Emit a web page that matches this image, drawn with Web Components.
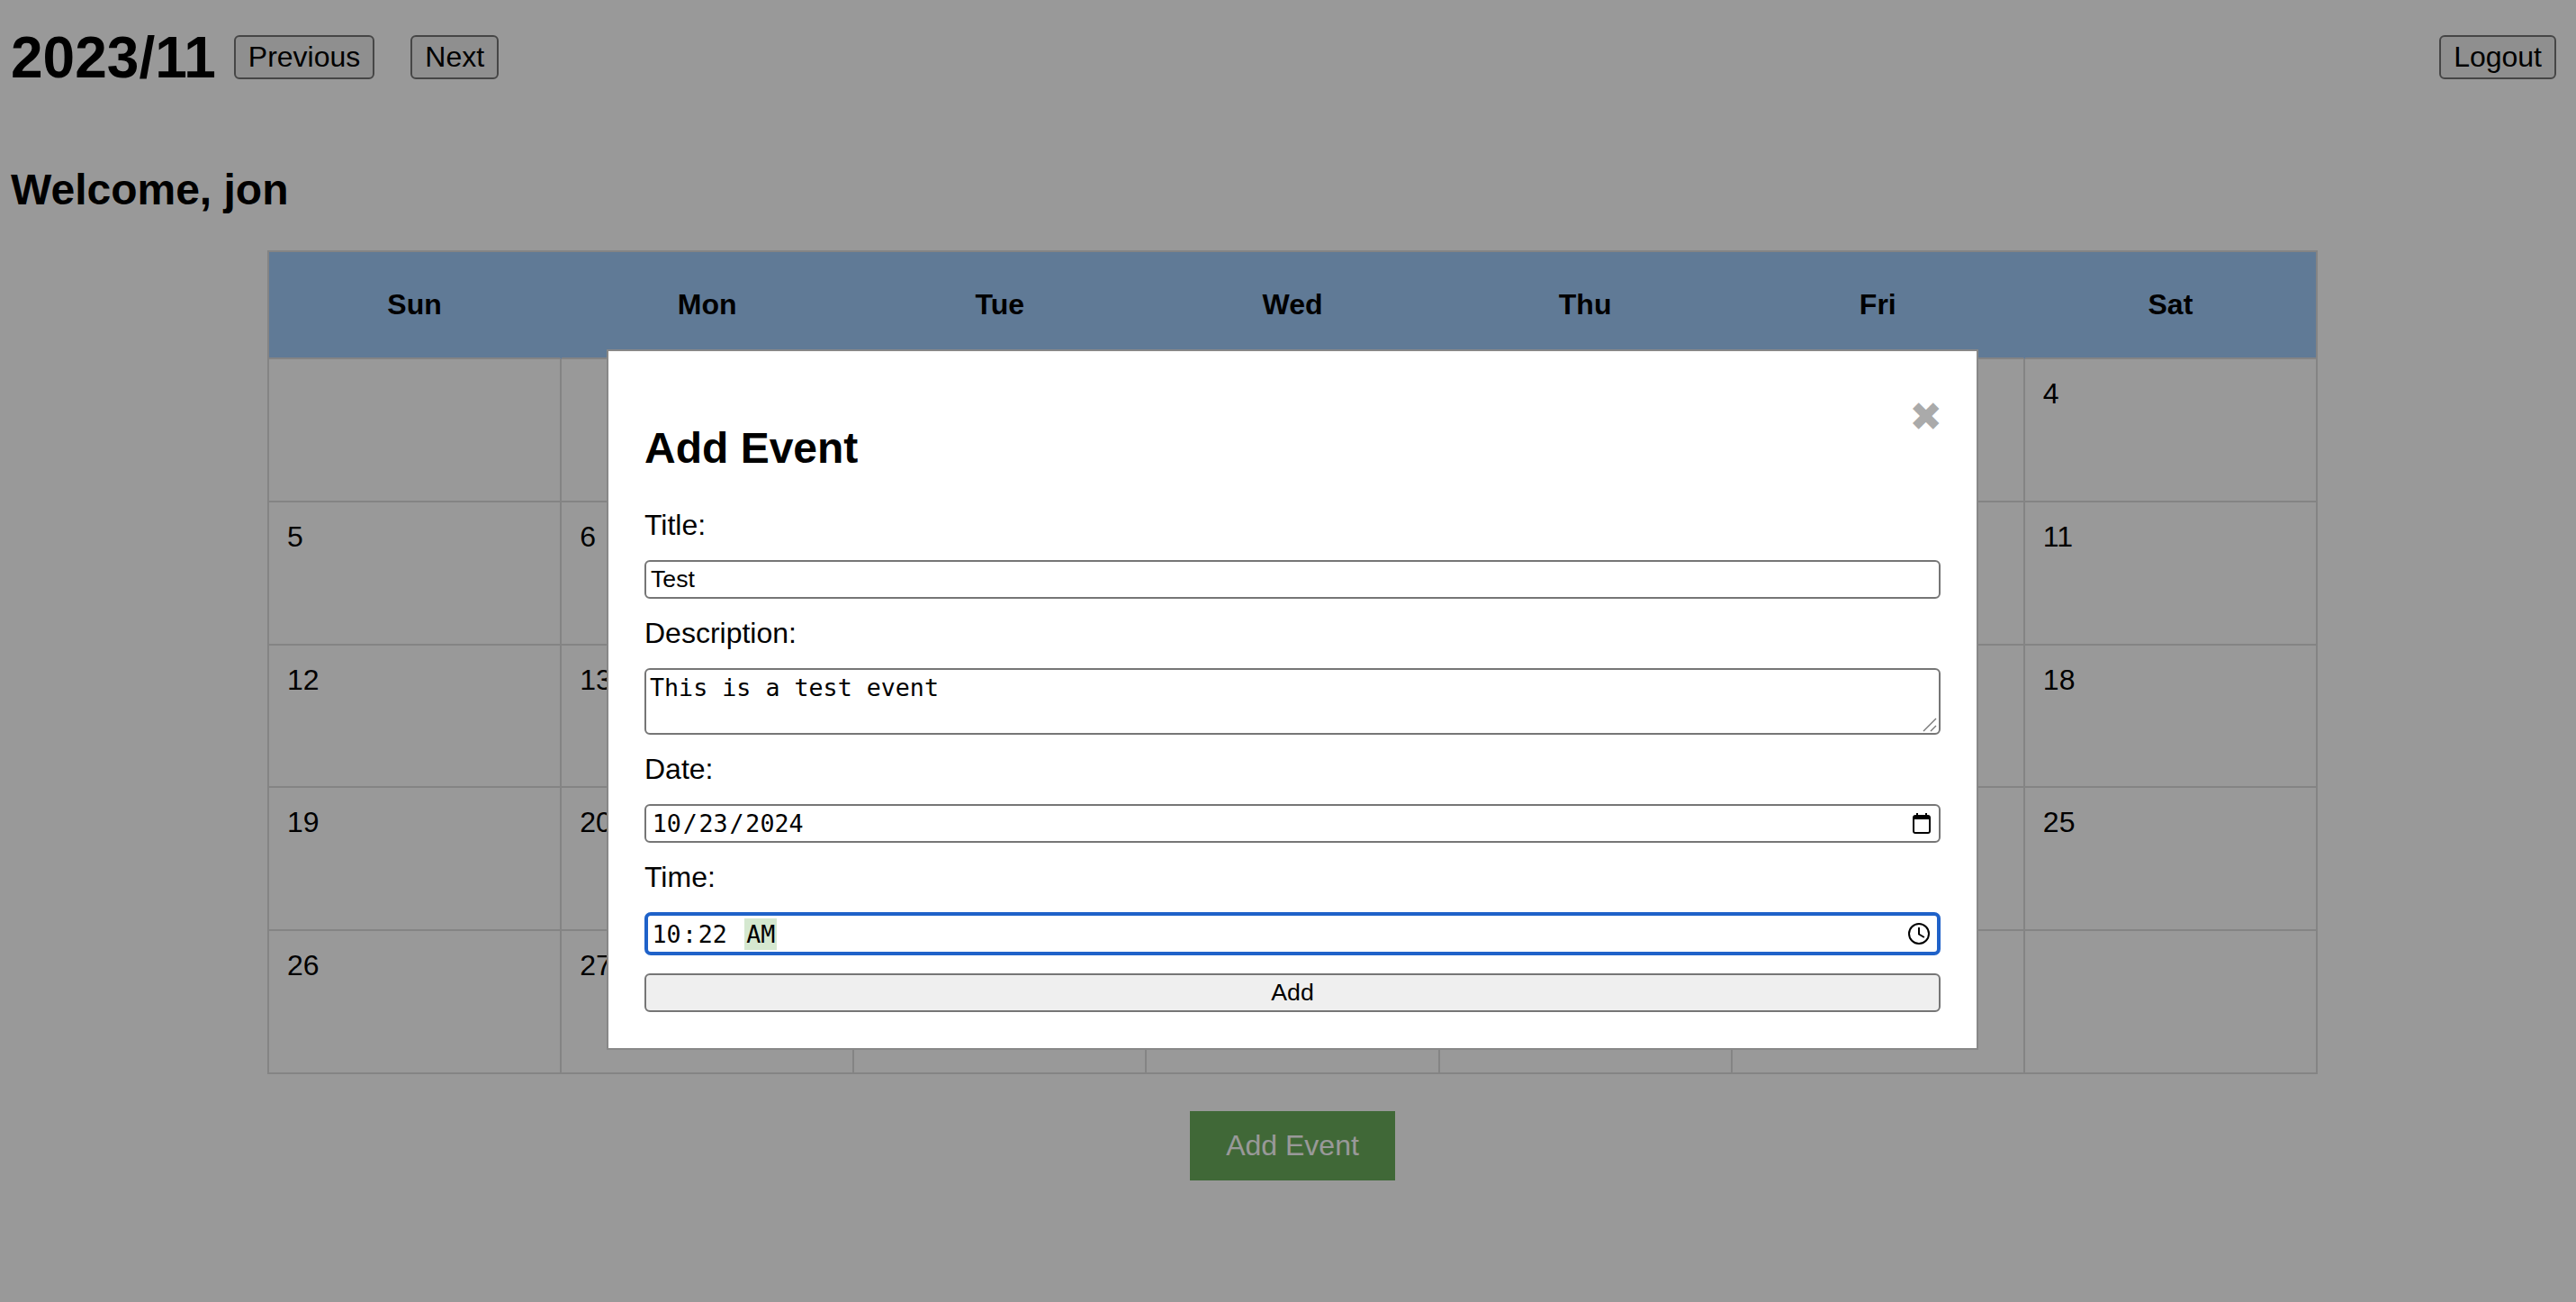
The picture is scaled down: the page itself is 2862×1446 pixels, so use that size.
<!DOCTYPE html>
<html lang="en">
<head>
<meta charset="utf-8">
<title>Calendar</title>
<style>
  html, body { margin: 0; background: #fff; font-family: "Liberation Sans", Arial, sans-serif; color: #000; }
</style>
</head>
<body>
<calendar-header year-month="2023/11"></calendar-header>
<welcome-line>Welcome, jon</welcome-line>
<month-grid></month-grid>
<add-event-button>Add Event</add-event-button>

<event-modal heading="Add Event">
  <form-row label="Title:"><text-box>Test</text-box></form-row>
  <form-row label="Description:"><area-box>This is a test event</area-box></form-row>
  <form-row label="Date:"><date-box></date-box></form-row>
  <form-row label="Time:"><time-box></time-box></form-row>
  <submit-box>Add</submit-box>
</event-modal>

<script>
class CalendarHeader extends HTMLElement {
  connectedCallback() {
    this.attachShadow({ mode: 'open' });
    this.shadowRoot.innerHTML = `
      <style>
        :host { display: flex; align-items: center; height: 127px; padding: 0 22px 0 12px; box-sizing: border-box; }
        h1 { margin: 0 20px 0 0; font-size: 64px; line-height: 74px; font-weight: 700; }
        button {
          font: 32px "Liberation Sans", Arial, sans-serif; color: #000; background: #efefef;
          border: 2px solid #767676; border-radius: 6px; height: 49px; padding: 0 14px; box-sizing: border-box;
        }
        .next { margin-left: 40px; }
        .logout { margin-left: auto; }
      </style>
      <h1>${this.getAttribute('year-month')}</h1>
      <button>Previous</button>
      <button class="next">Next</button>
      <button class="logout">Logout</button>
    `;
  }
}
customElements.define('calendar-header', CalendarHeader);

class WelcomeLine extends HTMLElement {
  connectedCallback() {
    this.attachShadow({ mode: 'open' });
    this.shadowRoot.innerHTML = `
      <style>
        :host { display: block; margin: 56px 0 40px 12px; font-size: 48px; line-height: 55px; font-weight: 700; }
      </style>
      <slot></slot>
    `;
  }
}
customElements.define('welcome-line', WelcomeLine);

class MonthGrid extends HTMLElement {
  connectedCallback() {
    this.attachShadow({ mode: 'open' });
    const names = ['Sun', 'Mon', 'Tue', 'Wed', 'Thu', 'Fri', 'Sat'];
    // only the columns the modal leaves visible carry a number
    const days = ['', '', '', '', '', '', 4];
    for (let d = 5; d <= 30; d++) {
      const col = (d + 2) % 7;
      days.push(col >= 2 && col <= 5 ? '' : d);
    }
    days.push('', '');
    this.shadowRoot.innerHTML = `
      <style>
        :host {
          display: grid; grid-template-columns: repeat(7, 1fr); grid-template-rows: 119px repeat(5, 158.8px);
          width: 2278px; margin-left: 297px; box-sizing: border-box;
          border-top: 2px solid #ddd; border-left: 2px solid #ddd;
        }
        div { border-right: 2px solid #ddd; border-bottom: 2px solid #ddd; font-size: 32px; line-height: 37px; }
        .head {
          display: flex; align-items: center; justify-content: center; font-weight: 700;
          background: #a0cbfb; border-right-color: transparent;
        }
        .head.last { border-right-color: #ddd; }
        .day { padding: 20px; }
      </style>
      ${names.map((n, i) => `<div class="head${i === 6 ? ' last' : ''}">${n}</div>`).join('')}
      ${days.map(d => `<div class="day">${d}</div>`).join('')}
    `;
  }
}
customElements.define('month-grid', MonthGrid);

class AddEventButton extends HTMLElement {
  connectedCallback() {
    this.attachShadow({ mode: 'open' });
    this.shadowRoot.innerHTML = `
      <style>
        :host { display: flex; justify-content: center; width: 2872px; margin-top: 41px; }
        button {
          width: 228px; height: 77px; border: 0; padding: 0; color: #fff; background: #6bad5c;
          font: 32px "Liberation Sans", Arial, sans-serif;
        }
      </style>
      <button><slot></slot></button>
    `;
  }
}
customElements.define('add-event-button', AddEventButton);

class EventModal extends HTMLElement {
  connectedCallback() {
    this.attachShadow({ mode: 'open' });
    this.shadowRoot.innerHTML = `
      <style>
        :host {
          position: fixed; inset: 0; display: block; box-sizing: border-box;
          padding: 388px 0 0 674px; background: rgba(0, 0, 0, .4);
        }
        .box {
          position: relative; width: 1524px; box-sizing: border-box; padding: 40px;
          background: #fff; border: 2px solid #888;
        }
        h2 { margin: 40px 0; font-size: 48px; line-height: 55px; font-weight: 700; }
        .close {
          position: absolute; top: 45px; right: 38px; color: #aaa;
          font-family: "DejaVu Sans", sans-serif; font-size: 44px; line-height: 56px;
        }
        .fields { display: flex; flex-direction: column; }
      </style>
      <div class="box">
        <span class="close">✖</span>
        <h2>${this.getAttribute('heading')}</h2>
        <div class="fields"><slot></slot></div>
      </div>
    `;
  }
}
customElements.define('event-modal', EventModal);

class FormRow extends HTMLElement {
  connectedCallback() {
    this.attachShadow({ mode: 'open' });
    this.shadowRoot.innerHTML = `
      <style>
        :host { display: block; margin-bottom: 20px; }
        label { display: block; margin-bottom: 20px; font-size: 32px; line-height: 37px; }
      </style>
      <label>${this.getAttribute('label')}</label>
      <slot></slot>
    `;
  }
}
customElements.define('form-row', FormRow);

const fieldCss = `
  :host {
    display: flex; align-items: center; box-sizing: border-box; height: 43px; padding: 0 5px;
    border: 2px solid #767676; border-radius: 6px; background: #fff; font-size: 26.67px;
  }
  .mono { font-family: "DejaVu Sans Mono", "Liberation Mono", monospace; white-space: pre; }
  svg { margin-left: auto; flex: none; }
`;

class TextBox extends HTMLElement {
  connectedCallback() {
    this.attachShadow({ mode: 'open' });
    this.shadowRoot.innerHTML = `<style>${fieldCss}</style><slot></slot>`;
  }
}
customElements.define('text-box', TextBox);

class AreaBox extends HTMLElement {
  connectedCallback() {
    this.attachShadow({ mode: 'open' });
    this.shadowRoot.innerHTML = `
      <style>${fieldCss}
        :host { position: relative; display: block; height: 74px; padding: 4px 4px 0; font-family: "DejaVu Sans Mono", "Liberation Mono", monospace; line-height: 31px; }
        svg { position: absolute; right: 2px; bottom: 1px; }
      </style>
      <slot></slot>
      <svg width="16" height="16" viewBox="0 0 16 16" fill="none" stroke="#767676" stroke-width="1.4">
        <path d="M1 15 15 1M9 15l6-6"/>
      </svg>
    `;
  }
}
customElements.define('area-box', AreaBox);

class DateBox extends HTMLElement {
  connectedCallback() {
    this.attachShadow({ mode: 'open' });
    this.shadowRoot.innerHTML = `
      <style>${fieldCss}
        :host { padding: 0 4px 0 5px; }
        .seg { padding: 0 1.8px; }
        svg { margin-right: 5px; }
      </style>
      <span class="mono"><span class="seg">10</span>/<span class="seg">23</span>/<span class="seg">2024</span></span>
      <svg width="20" height="23" viewBox="0 0 20 23">
        <path fill="#000" d="M4 0h2v2h8V0h2v2h1c1.700 0 3 1.300 3 3v15c0 1.700-1.300 3-3 3H3c-1.700 0-3-1.300-3-3V5c0-1.700 1.300-3 3-3h1zM2 7v13c0 .6.4 1 1 1h14c.6 0 1-.4 1-1V7z"/>
      </svg>
    `;
  }
}
customElements.define('date-box', DateBox);

class TimeBox extends HTMLElement {
  connectedCallback() {
    this.attachShadow({ mode: 'open' });
    this.shadowRoot.innerHTML = `
      <style>${fieldCss}
        :host { height: 48px; padding: 0 4px 0 3px; border: 4px solid #1f62c9; border-radius: 7px; }
        .seg { padding: 0 1.500px; }
        .mark { display: inline-block; margin-left: 18px; padding: 0 2px; line-height: 35px; background: #d5e8d0; }
        svg { margin-right: 4px; }
      </style>
      <span class="mono"><span class="seg">10</span>:<span class="seg">22</span><span class="mark">AM</span></span>
      <svg width="24" height="24" viewBox="0 0 24 24" fill="none" stroke="#000" stroke-width="2">
        <circle cx="12" cy="12" r="11"/>
        <path d="M12 6v6.500l5 3" stroke-linecap="square"/>
      </svg>
    `;
  }
}
customElements.define('time-box', TimeBox);

class SubmitBox extends HTMLElement {
  connectedCallback() {
    this.attachShadow({ mode: 'open' });
    this.shadowRoot.innerHTML = `
      <style>
        :host {
          display: flex; align-items: center; justify-content: center; box-sizing: border-box; height: 43px;
          border: 2px solid #767676; border-radius: 6px; background: #efefef; font-size: 26.67px;
        }
      </style>
      <slot></slot>
    `;
  }
}
customElements.define('submit-box', SubmitBox);
</script>
</body>
</html>
